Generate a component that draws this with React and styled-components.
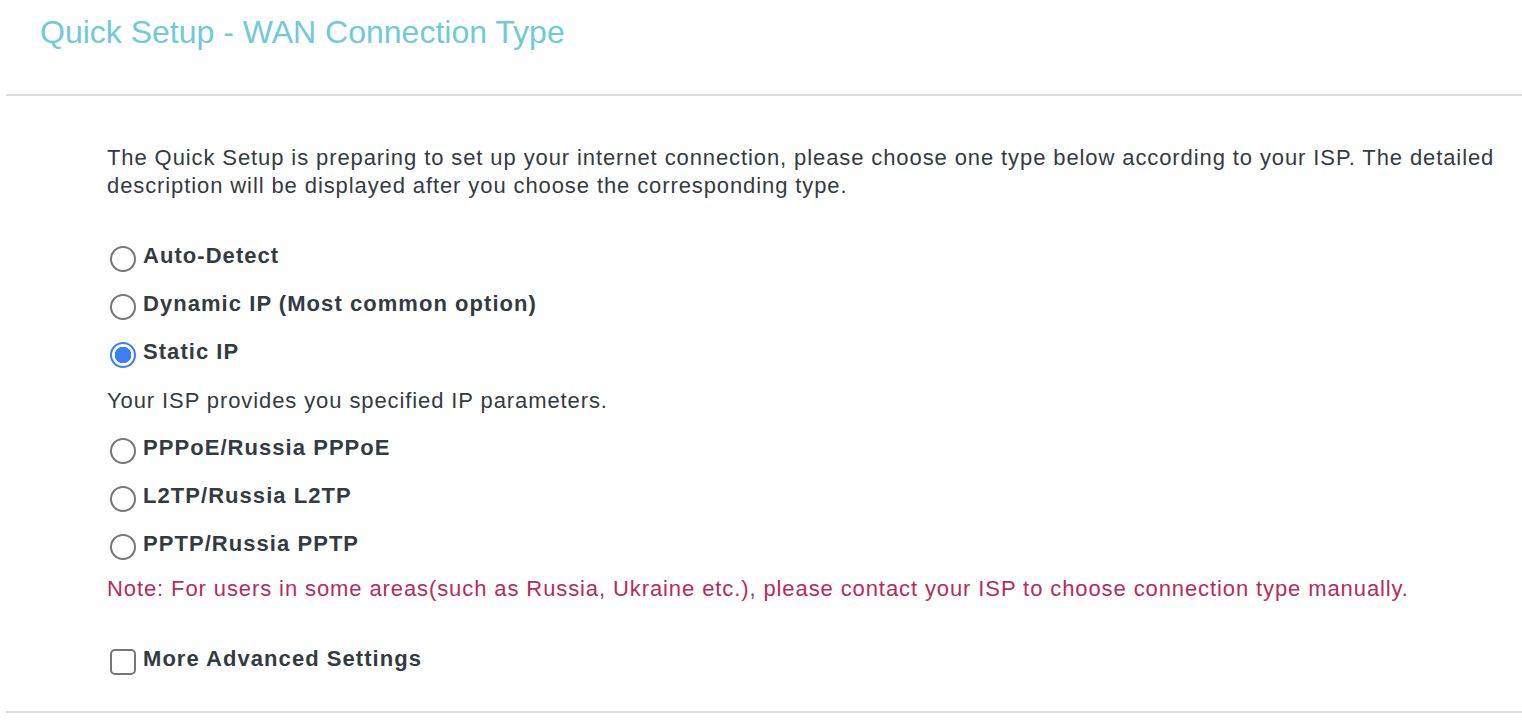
import React, { useState } from "react";
import styled, { createGlobalStyle } from "styled-components";

const GlobalStyle = createGlobalStyle`
  html, body {
    margin: 0;
    padding: 0;
    background: #ffffff;
  }
  body {
    font-family: "Liberation Sans", Arial, Helvetica, sans-serif;
    color: #333b42;
  }
`;

const Page = styled.div`
  width: 1522px;
  min-height: 722px;
  display: flex;
  flex-direction: column;
`;

const Header = styled.header`
  padding: 12px 0 0 40px;
`;

const Title = styled.h1`
  margin: 0;
  font-size: 32px;
  line-height: 40px;
  font-weight: 400;
  color: #70cad7;
`;

const Divider = styled.hr`
  margin: ${(p) => p.$top}px 0 0 6px;
  height: 2px;
  border: 0;
  background: #dddddd;
`;

const Content = styled.section`
  display: flex;
  flex-direction: column;
  padding: 0 15px 0 107px;
  font-size: 22px;
  line-height: 28px;
  letter-spacing: 0.9px;
`;

const Text = styled.p`
  margin: ${(p) => p.$top || 0}px 0 0;
  color: ${(p) => (p.$note ? "#b62b5e" : "#333b42")};
`;

const Option = styled.label`
  display: flex;
  align-items: flex-start;
  gap: 7px;
  margin-top: ${(p) => p.$top || 0}px;
  padding-left: 3px;
  font-weight: 700;
  letter-spacing: 1.05px;
  cursor: pointer;
`;

const Radio = styled.input.attrs({ type: "radio" })`
  appearance: none;
  box-sizing: border-box;
  width: 26px;
  height: 26px;
  margin: 4px 0 0;
  border: 2px solid #777777;
  border-radius: 50%;
  background: #fff;
  flex-shrink: 0;
  cursor: pointer;
  &:checked {
    border-color: #3a7ff5;
    background: radial-gradient(circle, #3a7ff5 0 8px, #fff 8.5px);
  }
`;

const Check = styled.input.attrs({ type: "checkbox" })`
  appearance: none;
  box-sizing: border-box;
  width: 26px;
  height: 26px;
  margin: 4px 0 0;
  border: 2px solid #777777;
  border-radius: 5px;
  background: #fff;
  flex-shrink: 0;
  cursor: pointer;
  &:checked {
    border-color: #3a7ff5;
    background: #3a7ff5;
  }
`;

const types = [
  { id: "auto", label: "Auto-Detect", desc: "The router will detect your connection type automatically." },
  { id: "dynamic", label: "Dynamic IP (Most common option)", desc: "Your ISP assigns IP parameters automatically." },
  { id: "static", label: "Static IP", desc: "Your ISP provides you specified IP parameters." },
  { id: "pppoe", label: "PPPoE/Russia PPPoE", desc: "Your ISP provides you a username and password." },
  { id: "l2tp", label: "L2TP/Russia L2TP", desc: "Your ISP provides you a username, password and server address." },
  { id: "pptp", label: "PPTP/Russia PPTP", desc: "Your ISP provides you a username, password and server address." },
];

// 각 행 사이 간격 (선택된 항목 뒤에는 설명 줄이 들어감)
function gapFor(index, selectedIndex) {
  if (index === 0) return 42;
  if (index === selectedIndex + 1) return 19;
  return 18;
}

export default function App() {
  const [type, setType] = useState("static");
  const [advanced, setAdvanced] = useState(false);
  const selectedIndex = types.findIndex((t) => t.id === type);

  return (
    <Page>
      <GlobalStyle />
      <Header>
        <Title>Quick Setup - WAN Connection Type</Title>
      </Header>
      <Divider $top={42} />
      <Content>
        <Text $top={48}>
          The Quick Setup is preparing to set up your internet connection, please choose one type below according to
          your ISP. The detailed description will be displayed after you choose the corresponding type.
        </Text>
        {types.map((t, i) => (
          <React.Fragment key={t.id}>
            <Option $top={gapFor(i, selectedIndex)}>
              <Radio name="wan" checked={type === t.id} onChange={() => setType(t.id)} />
              {t.label}
            </Option>
            {type === t.id && <Text $top={19}>{t.desc}</Text>}
          </React.Fragment>
        ))}
        <Text $note $top={15}>
          Note: For users in some areas(such as Russia, Ukraine etc.), please contact your ISP to choose connection type
          manually.
        </Text>
        <Option $top={42}>
          <Check checked={advanced} onChange={() => setAdvanced(!advanced)} />
          More Advanced Settings
        </Option>
      </Content>
      <Divider $top={36} />
    </Page>
  );
}
